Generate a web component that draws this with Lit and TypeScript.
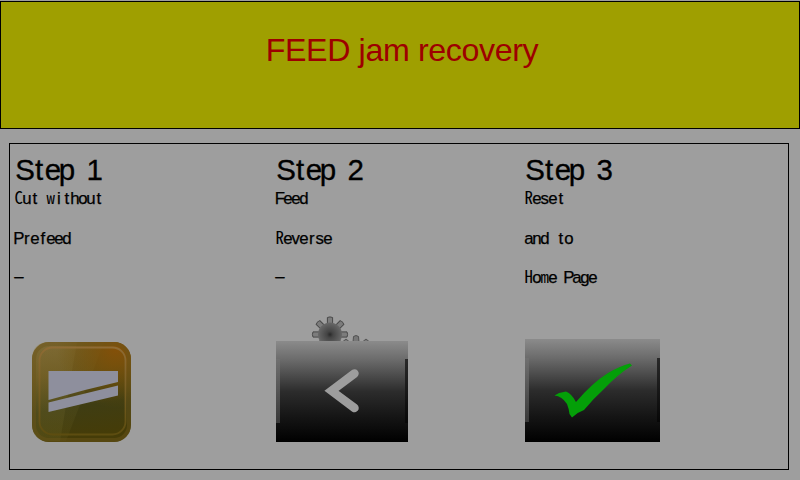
import { LitElement, html, css, svg } from "lit";
import { customElement } from "lit/decorators.js";

const TEETH = [0, 45, 90, 135, 180, 225, 270, 315];

const gear = (x: number, y: number) => svg`
  <g transform="translate(${x} ${y})">
    ${TEETH.map(
      (a) => svg`<path d="M-2.6 -10 L-2.6 -17 Q0 -18.2 2.6 -17 L2.6 -10Z" transform="rotate(${a})"
        fill="#7c7c7c" stroke="#484848" stroke-width="1"/>`
    )}
    <circle r="12" fill="url(#hub)"/>
  </g>`;

// Centre of every character cell, so that the letters keep a fixed pitch.
const cells = (text: string, first: number, pitch: number) =>
  [...text].map((_, i) => (first + i * pitch).toFixed(1)).join(" ");

// Letters wider than a cell are drawn with their half-width forms.
const glyphs = (text: string) =>
  text.split(/([mwCRH])/).map((part) => (/^[mwCRH]$/.test(part) ? svg`<tspan class="narrow">${part}</tspan>` : part));

@customElement("app-root")
export class AppRoot extends LitElement {
  static styles = css`
    :host {
      display: flex;
      flex-direction: column;
      width: 800px;
      height: 480px;
      overflow: hidden;
      box-sizing: border-box;
      padding-top: 1px;
      background: #9e9e9e;
      color: #000;
    }
    .banner {
      flex: none;
      box-sizing: border-box;
      height: 128px;
      border: 1px solid #000;
      background: #9f9f00;
      color: #9d0000;
      font: 32.2px/36px "Liberation Sans", sans-serif;
      letter-spacing: -0.38px;
      text-align: center;
      padding: 30px 0 0 4px;
    }
    .panel {
      flex: none;
      box-sizing: border-box;
      width: 780px;
      height: 327px;
      margin: 14px 0 0 9px;
      border: 1px solid #000;
      padding-left: 4px;
      display: grid;
      grid-template-columns: 261px 249px 1fr;
    }
    .step {
      display: flex;
      flex-direction: column;
    }
    svg {
      display: block;
      flex: none;
      overflow: visible;
    }
    .title,
    .line {
      font-family: "Liberation Sans", sans-serif;
      text-anchor: middle;
      fill: #000;
      stroke: #000;
      white-space: pre;
    }
    .title {
      font-size: 29.5px;
      stroke-width: 0.3px;
    }
    .line {
      font-size: 16.8px;
      stroke-width: 0.25px;
    }
    .narrow {
      font-family: "Noto Sans CJK JP", sans-serif;
      font-feature-settings: "hwid";
      font-size: 16.8px;
      stroke: none;
    }
  `;

  private copy(title: string, lines: string[]) {
    return html`<svg width="245" height="150" viewBox="0 0 245 150">
      <text class="title" x=${cells(title, 11.2, 13.9)} y="36">${title}</text>
      ${lines.map(
        (t, i) => svg`<text class="line" x=${cells(t, 4.8, 8)} y=${t === "–" ? 137.5 : [60, 100, 139][i]}>${glyphs(t)}</text>`
      )}
    </svg>`;
  }

  render() {
    return html`
      <div class="banner">FEED jam recovery</div>
      <div class="panel">
        <div class="step">
          ${this.copy("Step 1", ["Cut without", "Prefeed", "–"])}
          <svg width="150" height="160" viewBox="14 294 150 160">
            <defs>
              <linearGradient id="gold" x1="0" y1="0" x2="0.15" y2="1">
                <stop offset="0" stop-color="#75602b" />
                <stop offset="0.35" stop-color="#67531b" />
                <stop offset="0.7" stop-color="#3f3d13" />
                <stop offset="1" stop-color="#453c08" />
              </linearGradient>
              <radialGradient id="glow" cx="0.85" cy="0.06" r="0.6">
                <stop offset="0" stop-color="#855008" />
                <stop offset="1" stop-color="#6a4c00" stop-opacity="0" />
              </radialGradient>
              <linearGradient id="rim" x1="0" y1="0" x2="0" y2="1">
                <stop offset="0" stop-color="#8e6b34" />
                <stop offset="1" stop-color="#5d4d10" />
              </linearGradient>
              <linearGradient id="shine" x1="0" y1="0" x2="0" y2="1">
                <stop offset="0" stop-color="#97854d" stop-opacity="0.3" />
                <stop offset="1" stop-color="#77702d" stop-opacity="0.25" />
              </linearGradient>
            </defs>
            <rect x="32" y="342" width="99" height="100" rx="17" fill="url(#gold)" />
            <path d="M49 342H77L60 441H49Q32 441 32 424V359Q32 342 49 342Z" fill="url(#shine)" />
            <path d="M77 342H104L66 441H60Z" fill="url(#shine)" opacity=".45" />
            <rect x="32" y="342" width="99" height="100" rx="17" fill="url(#glow)" />
            <rect x="34" y="344" width="95" height="96" rx="15" fill="none" stroke="#6b541a" stroke-opacity=".45" stroke-width="4" />
            <rect x="39.500" y="347.500" width="86" height="87" rx="13" fill="none" stroke="url(#rim)" stroke-width="1.8" />
            <path d="M48.500 371H118V382L85 390L48.500 400Z M48.500 402.500L85 393.500L118 385.500V395.500L48.500 412Z" fill="#8e8f9d" />
          </svg>
        </div>
        <div class="step">
          ${this.copy("Step 2", ["Feed", "Reverse", "–"])}
          <svg width="150" height="160" viewBox="275 294 150 160">
            <defs>
              <radialGradient id="hub">
                <stop offset="0" stop-color="#292929" />
                <stop offset="0.25" stop-color="#444" />
                <stop offset="1" stop-color="#686868" />
              </radialGradient>
              <linearGradient id="key2" x1="0" y1="0" x2="0" y2="1">
                <stop offset="0" stop-color="#8b8b8b" />
                <stop offset="0.18" stop-color="#6c6c6c" />
                <stop offset="0.5" stop-color="#2c2c2c" />
                <stop offset="0.75" stop-color="#151515" />
                <stop offset="1" stop-color="#000" />
              </linearGradient>
              <linearGradient id="left2" x1="0" y1="0" x2="0" y2="1">
                <stop offset="0" stop-color="#707070" />
                <stop offset="1" stop-color="#383838" />
              </linearGradient>
              <linearGradient id="right2" x1="0" y1="0" x2="0" y2="1">
                <stop offset="0" stop-color="#292929" />
                <stop offset="1" stop-color="#070707" />
              </linearGradient>
            </defs>
            ${gear(330, 334.5)}
            <path d="M353 342L353.500 336.500Q356 334.500 358.500 336.500L359 342Z" fill="#777" stroke="#444" stroke-width=".8" />
            <path d="M343 341.500L346 339L349 341.500M363 341.500L366 339L369 341.500" fill="#777" stroke="#555" />
            <rect x="276" y="341" width="132" height="101" fill="url(#key2)" />
            <rect x="276" y="359" width="4" height="64" fill="url(#left2)" />
            <rect x="405" y="359" width="3" height="64" fill="url(#right2)" />
            <path d="M354.500 373.500L331.500 390.800L354.500 408" fill="none" stroke="#9d9d9d" stroke-width="8.500" stroke-linejoin="miter" stroke-linecap="round" />
          </svg>
        </div>
        <div class="step">
          ${this.copy("Step 3", ["Reset", "and to", "Home Page"])}
          <svg width="150" height="160" viewBox="524 294 150 160">
            <defs>
              <linearGradient id="key3" x1="0" y1="0" x2="0" y2="1">
                <stop offset="0" stop-color="#8b8b8b" />
                <stop offset="0.18" stop-color="#6c6c6c" />
                <stop offset="0.5" stop-color="#2c2c2c" />
                <stop offset="0.75" stop-color="#151515" />
                <stop offset="1" stop-color="#000" />
              </linearGradient>
              <linearGradient id="left3" x1="0" y1="0" x2="0" y2="1">
                <stop offset="0" stop-color="#707070" />
                <stop offset="1" stop-color="#383838" />
              </linearGradient>
              <linearGradient id="right3" x1="0" y1="0" x2="0" y2="1">
                <stop offset="0" stop-color="#292929" />
                <stop offset="1" stop-color="#070707" />
              </linearGradient>
            </defs>
            <rect x="525" y="339" width="135" height="103" fill="url(#key3)" />
            <rect x="525" y="358" width="4" height="64" fill="url(#left3)" />
            <rect x="657" y="358" width="3" height="64" fill="url(#right3)" />
            <path d="M554.500 395.500L559 393L566 391.500Q572 394 576 402Q592 383 608 373Q620 366 630 363.500L632 365.500Q617 375 604 389Q593 399 584 410Q578 412 572 417.500L569.500 414Q569 409 567 404Q562 396 554.500 395.500Z" fill="#049f08" />
          </svg>
        </div>
      </div>
    `;
  }
}
